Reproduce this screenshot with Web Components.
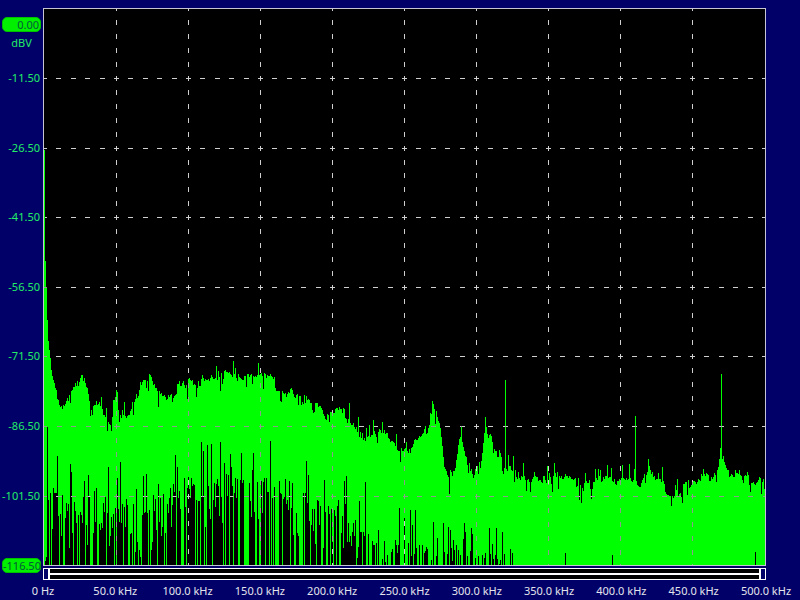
<!DOCTYPE html>
<html><head><meta charset="utf-8"><title>Spectrum</title>
<style>html,body{margin:0;padding:0;background:#000068;}</style></head>
<body><spectrum-app></spectrum-app>
<script>
const FONT='"Noto Sans","Open Sans",sans-serif';
class LevelBadge extends HTMLElement{constructor(){super();this.attachShadow({mode:'open'}).innerHTML=`<style>
:host{display:block;box-sizing:border-box;width:39px;height:15px;background:#00f000;border:1px solid #00c000;border-radius:5px;color:#055a3a;font:11px/13px ${FONT};text-align:right;padding-right:1px;white-space:nowrap}
</style><slot></slot>`}}
customElements.define('level-badge',LevelBadge);

class LevelAxis extends HTMLElement{constructor(){super();
const labels=['-11.50','-26.50','-41.50','-56.50','-71.50','-86.50','-101.50'];
this.attachShadow({mode:'open'}).innerHTML=`<style>
:host{display:block;width:43px;box-sizing:border-box;padding:17px 0 0 2px;color:#22ee66;font:11px/14px ${FONT}}
.head{height:26.2px}
.unit{text-align:center;width:39px;margin-top:5px;line-height:12px}
.row{height:69.6px;display:flex;align-items:center;justify-content:flex-end;padding-right:3px}
.row.b{padding-right:0;justify-content:flex-start}
</style><div class="head"><level-badge>0.00</level-badge><div class="unit">dBV</div></div>
${labels.map(l=>`<div class="row">${l}</div>`).join('')}
<div class="row b"><level-badge>-116.50</level-badge></div>`}}
customElements.define('level-axis',LevelAxis);

class SpectrumPlot extends HTMLElement{constructor(){super();
const W=721,H=556,ox=44,oy=9,BOT=565;
let s=12345;const R=()=>{s=(s*1664525+1013904223)>>>0;return s/4294967296};
const top=[[44,232],[46,300],[48,345],[50,365],[54,385],[58,405],[62,412],[66,400],[72,392],[78,384],[84,380],[88,392],[92,410],[98,404],[104,412],[110,418],[116,396],[121,412],[127,420],[132,410],[137,396],[143,385],[149,370],[154,380],[160,392],[166,402],[172,398],[178,386],[184,380],[190,382],[198,384],[206,382],[214,379],[224,376],[232,374],[242,380],[252,378],[263,372],[272,382],[282,390],[294,396],[306,402],[318,408],[328,416],[336,414],[344,410],[352,424],[362,436],[372,430],[382,434],[392,438],[402,450],[410,446],[420,436],[428,424],[433,404],[438,424],[441,440],[444,470],[450,482],[455,464],[459,434],[463,452],[468,468],[476,476],[481,458],[485,426],[490,436],[496,448],[503,466],[512,470],[522,474],[532,480],[545,480],[560,478],[572,482],[582,485],[592,486],[602,478],[614,482],[626,484],[640,480],[652,472],[660,482],[670,492],[680,490],[690,484],[700,476],[714,474],[722,456],[726,472],[736,476],[750,478],[766,484]];
const bot=[[44,470],[48,490],[54,498],[62,508],[72,520],[82,512],[92,508],[104,518],[114,514],[122,504],[132,514],[142,526],[152,514],[162,504],[174,494],[186,488],[196,490],[206,500],[216,494],[226,486],[240,484],[252,484],[264,490],[278,502],[292,504],[304,506],[316,512],[330,520],[344,526],[358,534],[372,544],[386,552],[398,558],[410,556],[422,556],[434,562],[450,558],[462,556],[474,562],[486,566],[600,566]];
const lerp=(t,x)=>{for(let i=1;i<t.length;i++){if(x<=t[i][0]){const a=t[i-1],b=t[i];return a[1]+(b[1]-a[1])*(x-a[0])/(b[0]-a[0])}}return t[t.length-1][1]};
const cols=[];let wob=0,next=0;
for(let x=44;x<766;x++){
 if(x>=next){wob=R()*11-5.5;next=x+2+Math.floor(R()*5)}
 let t=lerp(top,x)+wob+R()*5-2;
 if(R()<.09)t-=4+R()*10;
 if(x>60&&R()<.05)t+=6+R()*9;
 const e=lerp(bot,x);let b;const r=R();
 if(x<505){
   if(r<.30)b=BOT;
   else if(r<.55)b=e+R()*35;
   else if(r<.82)b=e-R()*14;
   else b=e-10-R()*(x<440?48:28);
 }else{b=r<.015?BOT-4-R()*14:BOT}
 b=Math.min(b,BOT);
 cols.push([Math.round(t),Math.round(b)]);
}
cols[505-ox][0]=380;cols[635-ox][0]=416;cols[721-ox][0]=374;
for(let x=44;x<47;x++){cols[x-ox][1]=BOT-Math.round((x-44)*4)}
let solid='',grey='';
cols.forEach((c,i)=>{solid+=`M${i+.5} ${c[0]-oy}V${c[1]-oy}`});
const vx=[],hy=[];
for(let k=1;k<=9;k++)vx.push(116+72*(k-1));
for(let k=0;k<7;k++)hy.push(Math.round(78+69.6*k));
const PH=14.4,PV=13.92;
const hOn=x=>{const d=((x-114)%PH+PH)%PH;return d<5};
const vOn=y=>{const d=((y-76)%PV+PV)%PV;return d<5};
hy.forEach(y=>{cols.forEach((c,i)=>{const x=i+ox;if(hOn(x)&&y>=c[0]&&y<c[1])grey+=`M${i} ${y-oy+.5}h1`})});
vx.forEach(x=>{const c=cols[x-ox];for(let y=c[0];y<c[1];y++)if(vOn(y))grey+=`M${x-ox+.5} ${y-oy}v1`});
let grid='';
vx.forEach(x=>grid+=`<path class="v" d="M${x-ox+.5} 0V${H}"/>`);
hy.forEach(y=>grid+=`<path class="h" d="M0 ${y-oy+.5}H${W}"/>`);
this.attachShadow({mode:'open'}).innerHTML=`<style>
:host{display:block;box-sizing:border-box;width:723px;height:558px;border:1px solid #c4c4d4;background:#000}
svg{display:block}
.g path{fill:none;stroke:#cfcfcf;stroke-width:1}
.g .v{stroke-dasharray:5 8.92;stroke-dashoffset:-11.32}
.g .h{stroke-dasharray:5 9.4;stroke-dashoffset:-12.4}
</style><svg width="${W}" height="${H}" viewBox="0 0 ${W} ${H}" shape-rendering="crispEdges">
<g class="g">${grid}</g>
<path d="${solid}" fill="none" stroke="#00ff00" stroke-width="1"/>
<path d="M0.5 ${150-oy}V${232-oy}" fill="none" stroke="#00ff00" stroke-width="1"/>
<path d="${grey}" fill="none" stroke="#8c9c8c" stroke-width="1"/>
</svg>`}}
customElements.define('spectrum-plot',SpectrumPlot);

class RangeBar extends HTMLElement{constructor(){super();this.attachShadow({mode:'open'}).innerHTML=`<style>
:host{display:flex;width:723px;height:12px;margin-top:2px}
.h{box-sizing:border-box;width:7px;border:1px solid #fff;border-width:1px 2px 1px 1px;background:#000068}
.h.r{border-width:1px 1px 1px 2px}
.t{flex:1;box-sizing:border-box;background:linear-gradient(#000 0 4px,#fff 4px 6px,#000 6px);border:solid #fff;border-width:1px 0}
</style><div class="h"></div><div class="t"></div><div class="h r"></div>`}}
customElements.define('range-bar',RangeBar);

class FreqAxis extends HTMLElement{constructor(){super();
const l=['0 Hz','50.0 kHz','100.0 kHz','150.0 kHz','200.0 kHz','250.0 kHz','300.0 kHz','350.0 kHz','400.0 kHz','450.0 kHz','500.0 kHz'];
this.attachShadow({mode:'open'}).innerHTML=`<style>
:host{display:grid;grid-template-columns:repeat(10,72.3px) 1fr;margin-top:4px;color:#e4e4ec;font:11px/14px ${FONT};white-space:nowrap;width:800px;margin-left:-36px}
span{display:block;width:72px;text-align:center}
</style>${l.map(t=>`<span>${t}</span>`).join('')}`}}
customElements.define('freq-axis',FreqAxis);

class SpectrumApp extends HTMLElement{constructor(){super();this.attachShadow({mode:'open'}).innerHTML=`<style>
:host{display:grid;grid-template-columns:43px 723px 34px;width:800px;height:600px;background:#000068;overflow:hidden}
.m{padding-top:8px;display:block}
</style><level-axis></level-axis><div class="m"><spectrum-plot></spectrum-plot><range-bar></range-bar><freq-axis></freq-axis></div>`}}
customElements.define('spectrum-app',SpectrumApp);
</script></body></html>
